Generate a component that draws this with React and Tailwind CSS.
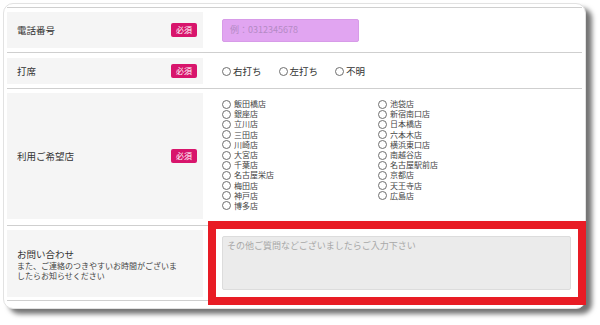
import React from "react";

const col1 = ["飯田橋店", "銀座店", "立川店", "三田店", "川崎店", "大宮店", "千葉店", "名古屋栄店", "梅田店", "神戸店", "博多店"];
const col2 = ["池袋店", "新宿南口店", "日本橋店", "六本木店", "横浜東口店", "南越谷店", "名古屋駅前店", "京都店", "天王寺店", "広島店"];

function Radio({ size = "w-[9px] h-[9px]" }) {
  return <span className={`inline-block ${size} rounded-full border border-[#6f6f6f] bg-white shrink-0`} />;
}

function Badge() {
  return (
    <span className="flex items-center justify-center w-[26px] h-[14px] rounded-[2px] bg-[#d8156c] text-white text-[8px] leading-none">
      必須
    </span>
  );
}

function Label({ children, height }) {
  return (
    <div className={`w-[196px] ${height} bg-[#f5f5f5] flex items-center justify-between pl-[10px] pr-[6px] shrink-0`}>
      {children}
      <Badge />
    </div>
  );
}

export default function App() {
  return (
    <div
      className="relative w-[600px] h-[325px] bg-white overflow-hidden text-[#333]"
      style={{ fontFamily: '"Noto Sans CJK JP", "Noto Sans", sans-serif' }}
    >
      <div className="ml-[3px] mt-[3px] w-[583px] h-[306px] rounded-[10px] border border-[#e2e2e2] bg-white shadow-[6px_5px_5px_rgba(0,0,0,0.55)] px-[3px] pt-[3px]">
        {/* 電話番号 */}
        <div className="flex border-t border-[#cfcfcf] pt-[4px] pb-[4px]">
          <Label height="h-[36px]">
            <span className="text-[9.5px]">電話番号</span>
          </Label>
          <div className="flex items-center pl-[19px]">
            <div className="w-[137px] h-[23px] rounded-[2px] bg-[#e1a5f1] border border-[#d79be8] flex items-center pl-[7px] text-[9px] text-[#b48ac5]">
              例：0312345678
            </div>
          </div>
        </div>

        {/* 打席 */}
        <div className="flex border-t border-[#cfcfcf] pt-[5px] pb-[4px]">
          <Label height="h-[26px]">
            <span className="text-[9.5px]">打席</span>
          </Label>
          <div className="flex items-center pl-[19px] text-[9.5px]">
            <span className="flex items-center gap-[2px]"><Radio />右打ち</span>
            <span className="flex items-center gap-[2px] ml-[17px]"><Radio />左打ち</span>
            <span className="flex items-center gap-[2px] ml-[17px]"><Radio />不明</span>
          </div>
        </div>

        {/* 利用ご希望店 */}
        <div className="flex border-t border-[#cfcfcf] pt-[4px] pb-[6px]">
          <Label height="h-[126px]">
            <span className="text-[9.5px]">利用ご希望店</span>
          </Label>
          <div className="flex pl-[19px] pt-[6px] text-[8px] leading-[10.2px] text-[#444]">
            <div className="w-[156px] flex flex-col">
              {col1.map((s) => (
                <span key={s} className="flex items-center gap-[3px] h-[10.2px]"><Radio />{s}</span>
              ))}
            </div>
            <div className="flex flex-col">
              {col2.map((s) => (
                <span key={s} className="flex items-center gap-[3px] h-[10.2px]"><Radio />{s}</span>
              ))}
            </div>
          </div>
        </div>

        {/* お問い合わせ */}
        <div className="flex border-t border-b border-[#cfcfcf] pt-[4px] pb-[3px]">
          <div className="w-[196px] h-[67px] bg-[#f5f5f5] flex flex-col justify-center pl-[10px] shrink-0">
            <span className="text-[9.5px] leading-[14px]">お問い合わせ</span>
            <span className="text-[8px] leading-[10px] text-[#444]">
              また、ご連絡のつきやすいお時間がございま
              <br />
              したらお知らせください
            </span>
          </div>
          <div className="pl-[19px] pt-[6px]">
            <div className="w-[349px] h-[54px] bg-[#ebebeb] border border-[#dcdcdc] rounded-[2px] px-[4px] pt-[2px] text-[9px] text-[#a8a8a8]">
              その他ご質問などございましたらご入力下さい
            </div>
          </div>
        </div>
      </div>

      {/* red highlight annotation */}
      <div className="absolute left-[208px] top-[221px] w-[378px] h-[84px] border-[8px] border-[#e81c25]" />
    </div>
  );
}
